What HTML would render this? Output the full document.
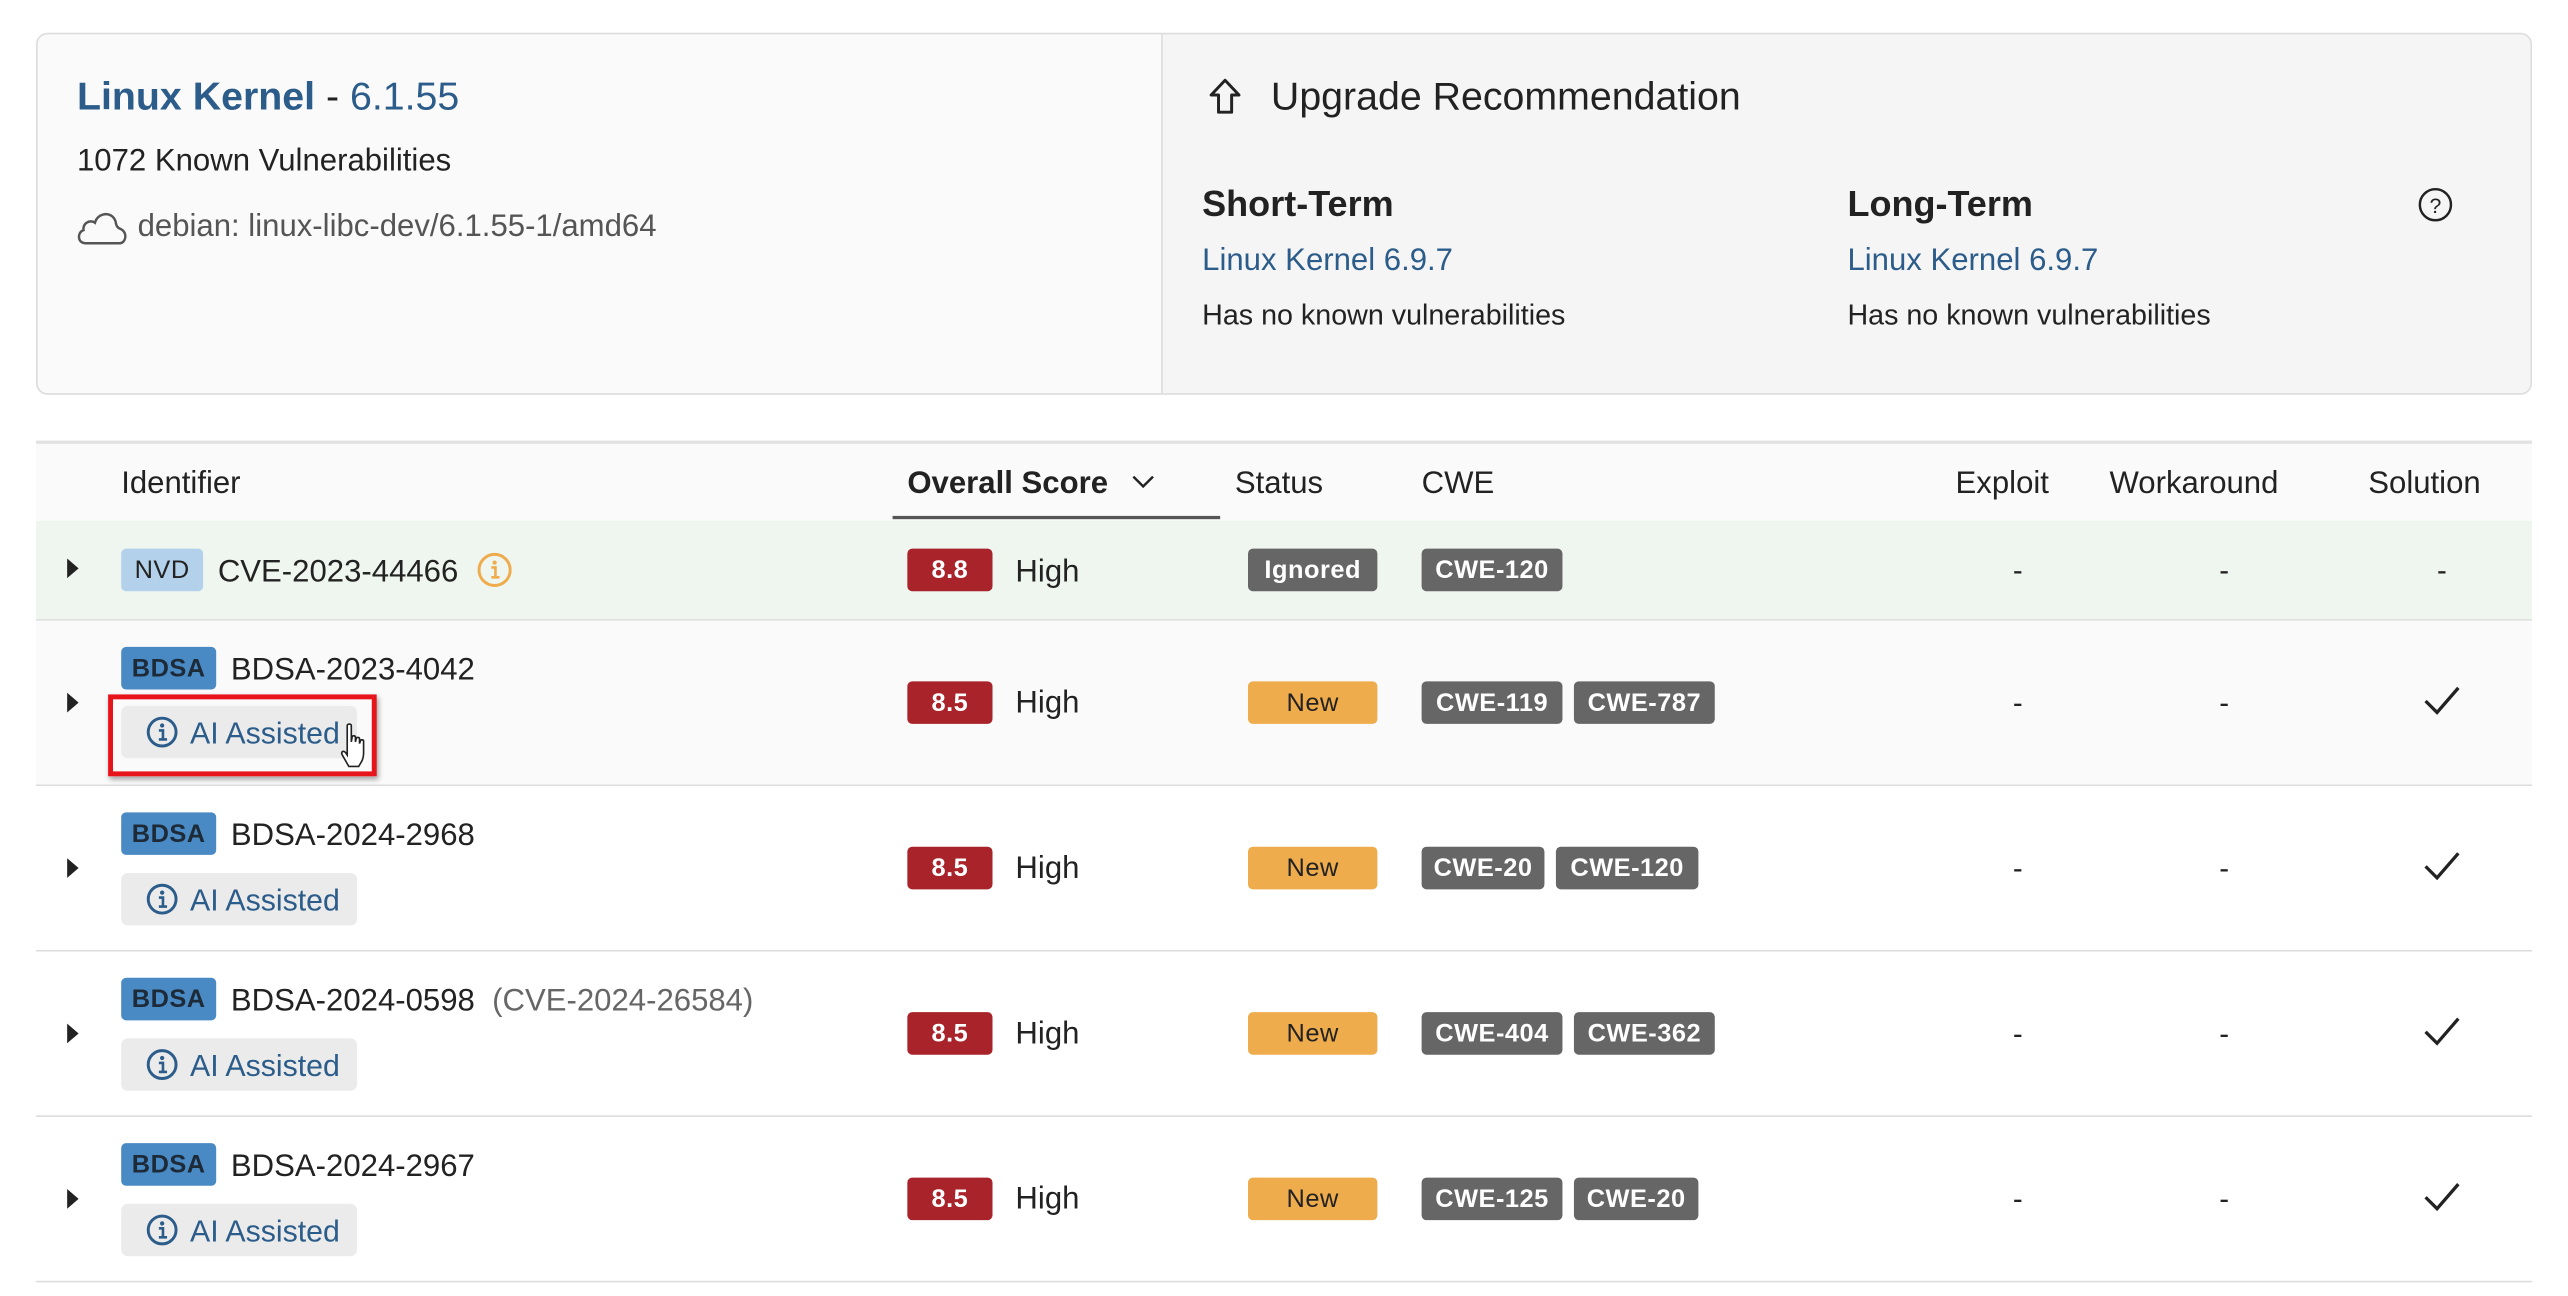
<!DOCTYPE html>
<html><head><meta charset="utf-8"><style>
html,body{margin:0;padding:0;background:#fff;width:2568px;height:1295px;overflow:hidden}
#w{position:absolute;left:0;top:0;width:1568px;height:791px;transform:scale(1.6378);transform-origin:0 0;font-family:"Liberation Sans",sans-serif;color:#222}
.a{position:absolute;white-space:nowrap}
.t{font-size:19px;line-height:26px;padding-top:2px}
.lnk{color:#2b5c8a}
.b{position:absolute;height:26px;line-height:27px;border-radius:3px;font-size:15.5px;font-weight:bold;text-align:center;letter-spacing:.3px}
.sc{background:#a8232a;color:#fff;width:52px}
.nw{background:#eeac4c;color:#222;width:79px;font-weight:normal}
.cw{background:#666;color:#fff}
.bd{background:#4a8ac4;color:#1d2a38;width:58px}
.hl{border-bottom:1px solid #ddd}
.chip{position:absolute;left:74px;width:144px;height:32px;background:#ebebeb;border-radius:4px}
.chip span{position:absolute;left:42px;top:4px;font-size:18.5px;line-height:26px;color:#2b5c8a}
.chip svg{position:absolute;left:15px;top:6px}
.tri{position:absolute;left:41px;width:0;height:0;border-top:6px solid transparent;border-bottom:6px solid transparent;border-left:7px solid #222}
.d{position:absolute;font-size:18px;line-height:26px;padding-top:1px}
</style></head><body><div id="w">
<div class="a" style="left:22px;top:20px;width:1522px;height:219px;border:1px solid #dcdcdc;border-radius:7px;background:#fafafa;overflow:hidden">
 <div style="position:absolute;left:686px;top:0;width:836px;height:219px;background:#f5f5f5;border-left:1px solid #ddd"></div>
</div>
<div class="a lnk" style="left:47px;top:45px;font-size:24px;line-height:30px"><span style="font-weight:600">Linux Kernel</span><span style="color:#222"> - </span>6.1.55</div>
<div class="a t" style="left:47px;top:84px">1072 Known Vulnerabilities</div>
<svg class="a" style="left:46px;top:126px" width="33" height="24" viewBox="0 0 33 24"><path d="M6 22.5 C1.5 22.5 0.8 16 5 14.5 C4.5 10 9 8 12 10 C13.5 4 22 2.5 24.5 9 C25 12 25.5 13 28 14 C32 16 31 22.5 27 22.5 Z" fill="none" stroke="#555" stroke-width="1.5"/></svg>
<div class="a t" style="left:84px;top:124px;color:#555">debian: linux-libc-dev/6.1.55-1/amd64</div>
<svg class="a" style="left:737px;top:47px" width="22" height="24" viewBox="0 0 22 24"><path d="M11 2 L2.5 11 L7 11 L7 21.5 L15 21.5 L15 11 L19.5 11 Z" fill="none" stroke="#222" stroke-width="1.8" stroke-linejoin="round"/></svg>
<div class="a" style="left:776px;top:45px;font-size:24px;line-height:30px">Upgrade Recommendation</div>
<div class="a" style="left:734px;top:111px;font-size:22px;line-height:28px;font-weight:600">Short-Term</div>
<div class="a t lnk" style="left:734px;top:145px">Linux Kernel 6.9.7</div>
<div class="a" style="left:734px;top:180px;font-size:17.5px;line-height:24px">Has no known vulnerabilities</div>
<div class="a" style="left:1128px;top:111px;font-size:22px;line-height:28px;font-weight:600">Long-Term</div>
<div class="a t lnk" style="left:1128px;top:145px">Linux Kernel 6.9.7</div>
<div class="a" style="left:1128px;top:180px;font-size:17.5px;line-height:24px">Has no known vulnerabilities</div>
<svg class="a" style="left:1476px;top:114px" width="22" height="22" viewBox="0 0 22 22"><circle cx="11" cy="11" r="9.5" fill="none" stroke="#222" stroke-width="1.5"/><text x="11" y="16" font-size="13" text-anchor="middle" font-family="Liberation Sans" fill="#222">?</text></svg>

<div class="a" style="left:22px;top:269px;width:1524px;height:48px;background:#fafafa;border-top:2px solid #e2e2e2;border-bottom:1px solid #ddd"></div>
<div class="a" style="left:545px;top:315px;width:200px;height:2px;background:#555"></div>
<div class="a t" style="left:74px;top:281px">Identifier</div>
<div class="a t" style="left:554px;top:281px;font-weight:600">Overall Score</div>
<svg class="a" style="left:690px;top:288px" width="16" height="12" viewBox="0 0 16 12"><path d="M2 3 L8 9 L14 3" fill="none" stroke="#222" stroke-width="1.5"/></svg>
<div class="a t" style="left:754px;top:281px">Status</div>
<div class="a t" style="left:868px;top:281px">CWE</div>
<div class="a t" style="left:1194px;top:281px">Exploit</div>
<div class="a t" style="left:1288px;top:281px">Workaround</div>
<div class="a t" style="left:1446px;top:281px">Solution</div>

<div class="a hl" style="left:22px;top:318px;width:1524px;height:60px;background:#eff5ef"></div>
<div class="a hl" style="left:22px;top:379px;width:1524px;height:100px;background:#fafafa"></div>
<div class="a hl" style="left:22px;top:480px;width:1524px;height:100px;background:#fff"></div>
<div class="a hl" style="left:22px;top:581px;width:1524px;height:100px;background:#fff"></div>
<div class="a hl" style="left:22px;top:682px;width:1524px;height:100px;background:#fff"></div>

<div class="tri" style="top:341px"></div>
<div class="b" style="left:74px;top:335px;width:50px;background:#b3d1ea;color:#222;font-weight:normal">NVD</div>
<div class="a t" style="left:133px;top:335px">CVE-2023-44466</div>
<svg class="a" style="left:291px;top:337px" width="22" height="22" viewBox="0 0 22 22"><circle cx="11" cy="11" r="9.5" fill="none" stroke="#eeac4c" stroke-width="1.8"/><circle cx="11" cy="6.5" r="1.3" fill="#eeac4c"/><path d="M9 9.5 H11.5 V15.5 M9 15.5 H14" fill="none" stroke="#eeac4c" stroke-width="1.6"/></svg>
<div class="b sc" style="left:554px;top:335px">8.8</div>
<div class="a t" style="left:620px;top:335px">High</div>
<div class="b cw" style="left:762px;top:335px;width:79px">Ignored</div>
<div class="b cw" style="left:868px;top:335px;width:86px">CWE-120</div>
<div class="d" style="left:1229px;top:334px">-</div><div class="d" style="left:1355px;top:334px">-</div><div class="d" style="left:1488px;top:334px">-</div>

<div class="tri" style="top:423px"></div>
<div class="b bd" style="left:74px;top:395px">BDSA</div>
<div class="a t" style="left:141px;top:395px">BDSA-2023-4042</div>
<div class="chip" style="top:431px"><svg width="20" height="20" viewBox="0 0 20 20"><circle cx="10" cy="10" r="8.5" fill="none" stroke="#2b5c8a" stroke-width="1.8"/><circle cx="10" cy="6" r="1.3" fill="#2b5c8a"/><path d="M8 9 H10.5 V14.5 M8 14.5 H13" fill="none" stroke="#2b5c8a" stroke-width="1.6"/></svg><span>AI Assisted</span></div>
<div class="a" style="left:66px;top:424px;width:158px;height:44px;border:3px solid #e8141b;box-shadow:1px 2px 3px rgba(0,0,0,.35)"></div>
<svg class="a" style="left:207px;top:441px" width="20" height="30" viewBox="0 0 20 30"><path d="M5 2 C5 0.8 7.5 0.8 7.5 2 V12 L8 9 C8 8 10 8 10 9 V12 L10.5 10 C10.5 9 12.5 9 12.5 10 V13 L13 11.5 C13 10.5 15 10.5 15 11.5 V19 C15 23 13 25 12 27 H6 L2 20 C1 18 2.5 17 4 18.5 L5 20 Z" fill="#fff" stroke="#222" stroke-width="1"/></svg>
<div class="b sc" style="left:554px;top:416px">8.5</div>
<div class="a t" style="left:620px;top:415px">High</div>
<div class="b nw" style="left:762px;top:416px">New</div>
<div class="b cw" style="left:868px;top:416px;width:86px">CWE-119</div>
<div class="b cw" style="left:961px;top:416px;width:86px">CWE-787</div>
<div class="d" style="left:1229px;top:415px">-</div><div class="d" style="left:1355px;top:415px">-</div>
<svg class="a" style="left:1479px;top:418px" width="24" height="20" viewBox="0 0 24 20"><path d="M2 10 L9 17 L22 2" fill="none" stroke="#222" stroke-width="2"/></svg>

<div class="tri" style="top:524px"></div>
<div class="b bd" style="left:74px;top:496px">BDSA</div>
<div class="a t" style="left:141px;top:496px">BDSA-2024-2968</div>
<div class="chip" style="top:533px"><svg width="20" height="20" viewBox="0 0 20 20"><circle cx="10" cy="10" r="8.5" fill="none" stroke="#2b5c8a" stroke-width="1.8"/><circle cx="10" cy="6" r="1.3" fill="#2b5c8a"/><path d="M8 9 H10.5 V14.5 M8 14.5 H13" fill="none" stroke="#2b5c8a" stroke-width="1.6"/></svg><span>AI Assisted</span></div>
<div class="b sc" style="left:554px;top:517px">8.5</div>
<div class="a t" style="left:620px;top:516px">High</div>
<div class="b nw" style="left:762px;top:517px">New</div>
<div class="b cw" style="left:868px;top:517px;width:75px">CWE-20</div>
<div class="b cw" style="left:950px;top:517px;width:87px">CWE-120</div>
<div class="d" style="left:1229px;top:516px">-</div><div class="d" style="left:1355px;top:516px">-</div>
<svg class="a" style="left:1479px;top:519px" width="24" height="20" viewBox="0 0 24 20"><path d="M2 10 L9 17 L22 2" fill="none" stroke="#222" stroke-width="2"/></svg>

<div class="tri" style="top:625px"></div>
<div class="b bd" style="left:74px;top:597px">BDSA</div>
<div class="a t" style="left:141px;top:597px">BDSA-2024-0598 <span style="color:#666">&nbsp;(CVE-2024-26584)</span></div>
<div class="chip" style="top:634px"><svg width="20" height="20" viewBox="0 0 20 20"><circle cx="10" cy="10" r="8.5" fill="none" stroke="#2b5c8a" stroke-width="1.8"/><circle cx="10" cy="6" r="1.3" fill="#2b5c8a"/><path d="M8 9 H10.5 V14.5 M8 14.5 H13" fill="none" stroke="#2b5c8a" stroke-width="1.6"/></svg><span>AI Assisted</span></div>
<div class="b sc" style="left:554px;top:618px">8.5</div>
<div class="a t" style="left:620px;top:617px">High</div>
<div class="b nw" style="left:762px;top:618px">New</div>
<div class="b cw" style="left:868px;top:618px;width:86px">CWE-404</div>
<div class="b cw" style="left:961px;top:618px;width:86px">CWE-362</div>
<div class="d" style="left:1229px;top:617px">-</div><div class="d" style="left:1355px;top:617px">-</div>
<svg class="a" style="left:1479px;top:620px" width="24" height="20" viewBox="0 0 24 20"><path d="M2 10 L9 17 L22 2" fill="none" stroke="#222" stroke-width="2"/></svg>

<div class="tri" style="top:726px"></div>
<div class="b bd" style="left:74px;top:698px">BDSA</div>
<div class="a t" style="left:141px;top:698px">BDSA-2024-2967</div>
<div class="chip" style="top:735px"><svg width="20" height="20" viewBox="0 0 20 20"><circle cx="10" cy="10" r="8.5" fill="none" stroke="#2b5c8a" stroke-width="1.8"/><circle cx="10" cy="6" r="1.3" fill="#2b5c8a"/><path d="M8 9 H10.5 V14.5 M8 14.5 H13" fill="none" stroke="#2b5c8a" stroke-width="1.6"/></svg><span>AI Assisted</span></div>
<div class="b sc" style="left:554px;top:719px">8.5</div>
<div class="a t" style="left:620px;top:718px">High</div>
<div class="b nw" style="left:762px;top:719px">New</div>
<div class="b cw" style="left:868px;top:719px;width:86px">CWE-125</div>
<div class="b cw" style="left:961px;top:719px;width:76px">CWE-20</div>
<div class="d" style="left:1229px;top:718px">-</div><div class="d" style="left:1355px;top:718px">-</div>
<svg class="a" style="left:1479px;top:721px" width="24" height="20" viewBox="0 0 24 20"><path d="M2 10 L9 17 L22 2" fill="none" stroke="#222" stroke-width="2"/></svg>
</div></body></html>
